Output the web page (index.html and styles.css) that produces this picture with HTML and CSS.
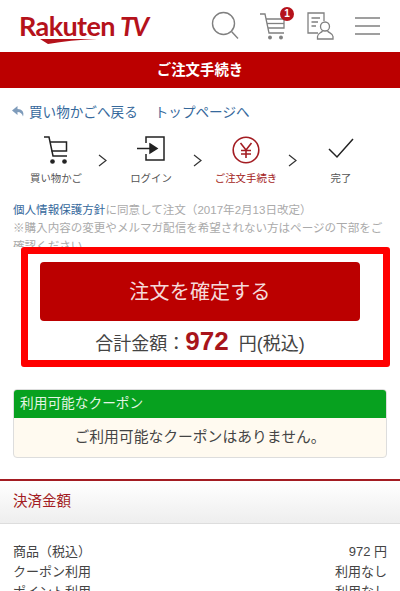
FILE: index.html
```html
<!DOCTYPE html>
<html lang="ja">
<head>
    <meta charset="UTF-8">
    <meta name="viewport" content="width=device-width, initial-scale=1.0">
    <title>ご注文手続き</title>
    <link rel="stylesheet" href="styles.css">
</head>
<body>
    <header class="site-header">
        <div class="logo">
            <span class="logo-name">Rakuten</span>
            <span class="logo-tv">TV</span>
            <svg class="logo-swoosh" width="57" height="5" viewBox="0 0 57 5"><path d="M0 0 L57 0 Q30 1 8 5 Z" fill="#b5121b"/></svg>
        </div>
        <nav class="header-icons">
            <svg class="icon-search" width="28" height="30" viewBox="0 0 28 30" fill="none" stroke="#808080" stroke-width="1.4">
                <circle cx="12.5" cy="12.5" r="11"/>
                <path d="M20.5 20.5 L27 27.5"/>
            </svg>
            <div class="cart">
                <svg width="26" height="28" viewBox="0 0 26 28" fill="none" stroke="#808080" stroke-width="1.3">
                    <path d="M0 2 H5 L9 21 H24"/>
                    <path d="M6 7 H24 V16 H8"/>
                    <path d="M7 11.5 H24"/>
                    <circle cx="10" cy="25.5" r="1.3" fill="#808080"/>
                    <circle cx="21" cy="25.5" r="1.3" fill="#808080"/>
                </svg>
                <span class="cart-badge">1</span>
            </div>
            <svg class="icon-account" width="27" height="28" viewBox="0 0 27 28" fill="none" stroke="#808080" stroke-width="1.3">
                <path d="M11 21 H1 V1 H17 V9"/>
                <path d="M4.5 6 H13 M4.5 10 H11 M4.5 14 H9"/>
                <circle cx="18" cy="14.5" r="4.5"/>
                <path d="M15.5 19 C14 21 10.5 21.5 10.5 24.5 V27 H26 V24.5 C26 21.5 22 21 20.5 19"/>
            </svg>
            <svg class="icon-menu" width="25" height="18" viewBox="0 0 25 18" stroke="#808080" stroke-width="1.5">
                <path d="M0 1 H25 M0 9 H25 M0 17 H25"/>
            </svg>
        </nav>
    </header>

    <h1 class="page-title">ご注文手続き</h1>

    <div class="back-links">
        <svg width="13" height="11" viewBox="0 0 13 11"><path d="M5.5 0 L0 4.5 L5.5 9 V6 C8.5 6 10 7.5 11 10.5 C12.5 6 10 3 5.5 3 Z" fill="#7f9cbb"/></svg>
        <a class="link" href="#">買い物かごへ戻る</a>
        <a class="link top-link" href="#">トップページへ</a>
    </div>

    <ol class="steps">
        <li class="step">
            <svg width="26" height="28" viewBox="0 0 26 28" fill="none" stroke="#222" stroke-width="1.5">
                <path d="M1 1 H6 L10 20 H24"/>
                <path d="M7 6 H23.5 V15 H8.5"/>
                <circle cx="9.5" cy="25.5" r="1.6" fill="#222"/>
                <circle cx="21.5" cy="25.5" r="1.6" fill="#222"/>
            </svg>
            <span>買い物かご</span>
        </li>
        <li class="step-arrow"><svg width="9" height="13" viewBox="0 0 9 13" fill="none" stroke="#333" stroke-width="1.2"><path d="M1 1 L8 6.5 L1 12"/></svg></li>
        <li class="step">
            <svg width="28" height="28" viewBox="0 0 28 28" fill="none" stroke="#222" stroke-width="1.5">
                <path d="M9 7 V1 H27 V24 H9 V18"/>
                <path d="M0 12.5 H14"/>
                <path d="M13 8 L20 12.5 L13 17 Z" fill="#222"/>
            </svg>
            <span>ログイン</span>
        </li>
        <li class="step-arrow"><svg width="9" height="13" viewBox="0 0 9 13" fill="none" stroke="#333" stroke-width="1.2"><path d="M1 1 L8 6.5 L1 12"/></svg></li>
        <li class="step step-current">
            <svg width="28" height="28" viewBox="0 0 28 28" fill="none" stroke="#a31c22" stroke-width="1.6">
                <circle cx="14" cy="14" r="12.8"/>
                <path d="M8.5 7 L14 14 L19.5 7 M14 14 V22 M9 14.5 H19 M9 18 H19"/>
            </svg>
            <span>ご注文手続き</span>
        </li>
        <li class="step-arrow"><svg width="9" height="13" viewBox="0 0 9 13" fill="none" stroke="#333" stroke-width="1.2"><path d="M1 1 L8 6.5 L1 12"/></svg></li>
        <li class="step">
            <svg width="26" height="28" viewBox="0 0 26 28" fill="none" stroke="#222" stroke-width="1.5">
                <path d="M1 13 L9 21 L25 3"/>
            </svg>
            <span>完了</span>
        </li>
    </ol>

    <div class="notice">
        <p><a class="link" href="#">個人情報保護方針</a>に同意して注文（2017年2月13日改定）</p>
        <p>※購入内容の変更やメルマガ配信を希望されない方はページの下部をご確認ください。</p>
    </div>

    <section class="order-box">
        <button class="order-button">注文を確定する</button>
        <p class="order-total">合計金額：<strong class="order-price">972</strong>円(税込)</p>
    </section>

    <section class="coupon">
        <h2 class="coupon-title">利用可能なクーポン</h2>
        <p class="coupon-body">ご利用可能なクーポンはありません。</p>
    </section>

    <h2 class="section-title">決済金額</h2>
    <dl class="summary">
        <div class="summary-row"><dt>商品（税込）</dt><dd>972 円</dd></div>
        <div class="summary-row"><dt>クーポン利用</dt><dd>利用なし</dd></div>
        <div class="summary-row"><dt>ポイント利用</dt><dd>利用なし</dd></div>
    </dl>
</body>
</html>
```

FILE: styles.css
```css
html, body {
    height: 591px;
    overflow: hidden;
}
body {
    margin: 0;
    background-color: white;
    color: #444;
    font-family: "Liberation Sans", "Noto Sans CJK JP", sans-serif;
}
h1, h2, p, ol, dl, dd {
    margin: 0;
    padding: 0;
}
.link {
    color: #36699c;
    text-decoration: none;
}

/* header */
.site-header {
    display: flex;
    justify-content: space-between;
    align-items: center;
    height: 52px;
    padding: 0 20px 0 19px;
    box-sizing: border-box;
}
.logo {
    position: relative;
    width: 132px;
    height: 32px;
    display: flex;
    align-items: baseline;
    color: #b5121b;
    font-family: Lato, sans-serif;
    font-weight: bold;
    white-space: nowrap;
}
.logo-name {
    font-size: 27px;
    letter-spacing: -0.6px;
    line-height: 32px;
}
.logo-tv {
    margin-left: 5px;
    font-size: 26px;
    font-style: italic;
    line-height: 32px;
    letter-spacing: -2px;
}
.logo-swoosh {
    position: absolute;
    left: 21px;
    top: 29px;
}
.header-icons {
    display: flex;
    align-items: center;
    gap: 21px;
}
.cart {
    position: relative;
    display: flex;
}
.cart-badge {
    position: absolute;
    top: -5px;
    right: -8px;
    width: 14px;
    height: 14px;
    border-radius: 50%;
    background-color: #b5121b;
    color: white;
    font-size: 10px;
    font-weight: bold;
    line-height: 14px;
    text-align: center;
}
.page-title {
    height: 36px;
    background-color: #bb0000;
    color: white;
    font-size: 14.4px;
    font-weight: bold;
    line-height: 37px;
    text-align: center;
}

/* back links */
.back-links {
    display: flex;
    align-items: center;
    height: 20px;
    margin-top: 13px;
    padding-left: 12px;
    font-size: 13.6px;
}
.back-links .link {
    margin-left: 4px;
}
.back-links .top-link {
    margin-left: 17px;
}

/* steps */
.steps {
    display: flex;
    justify-content: space-between;
    align-items: flex-start;
    height: 54px;
    margin-top: 15px;
    padding: 0 34px 0 31px;
    list-style: none;
}
.step {
    display: flex;
    flex-direction: column;
    align-items: center;
    width: 50px;
    gap: 8px;
    font-size: 10.4px;
    line-height: 14px;
    color: #555;
    white-space: nowrap;
}
.step-current {
    color: #a31c22;
}
.step-arrow {
    padding-top: 17px;
    margin-right: 2px;
}

/* notice above the order box, the third line runs under the box */
.notice {
    height: 46px;
    margin-top: 11px;
    padding: 0 13px;
    overflow: hidden;
    color: #aaa;
    font-size: 11.55px;
    line-height: 18px;
}

/* order box */
.order-box {
    width: 369px;
    height: 120px;
    margin-left: 21px;
    padding: 8px 23px 0 12px;
    box-sizing: border-box;
    border: 7px solid #ff0000;
    border-radius: 3px;
}
.order-button {
    display: block;
    width: 320px;
    height: 59px;
    padding-bottom: 3px;
    border: none;
    border-radius: 4px;
    background-color: #bb0000;
    color: #f5dada;
    font-family: inherit;
    font-size: 20px;
    letter-spacing: 0.2px;
}
.order-total {
    margin-top: 5px;
    font-size: 18px;
    line-height: 30px;
    text-align: center;
    color: #444;
    white-space: nowrap;
}
.order-price {
    color: #a8141b;
    font-size: 26px;
    margin-right: 10px;
}

/* coupon */
.coupon {
    width: 374px;
    margin: 22px 0 0 13px;
    box-sizing: border-box;
    border: 1px solid #ddd;
    border-radius: 4px;
    overflow: hidden;
    background-color: #fffaf0;
}
.coupon-title {
    height: 28px;
    background-color: #07a11f;
    color: #e4f5e4;
    font-size: 13.7px;
    font-weight: normal;
    line-height: 28px;
    padding-left: 6px;
}
.coupon-body {
    height: 39px;
    font-size: 14.8px;
    line-height: 39px;
    text-align: center;
}

/* payment summary */
.section-title {
    height: 42px;
    margin-top: 21px;
    padding-left: 13px;
    border-top: 2px solid #a31c22;
    border-bottom: 1px solid #ddd;
    background: linear-gradient(#ffffff, #eeeeee);
    color: #a31c22;
    font-size: 14.5px;
    font-weight: normal;
    line-height: 41px;
}
.summary {
    padding: 18px 13px 0;
    font-size: 13px;
    line-height: 20px;
}
.summary-row {
    display: flex;
    justify-content: space-between;
}
```
